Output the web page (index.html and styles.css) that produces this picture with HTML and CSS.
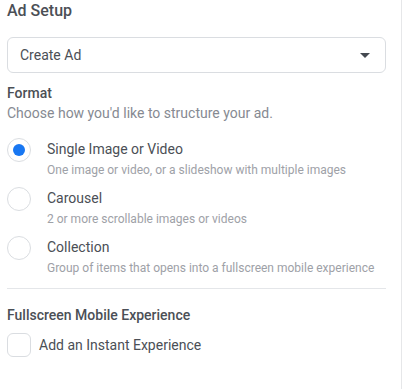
FILE: index.html
```html
<!DOCTYPE html>
<html lang="en">
<head>
  <meta charset="UTF-8" />
  <title>Ad Setup</title>
  <meta name="viewport" content="width=device-width, initial-scale=1.0" />
  <link rel="stylesheet" href="styles.css">
</head>
<body>
  <div class="panel">
    <h2 class="title">Ad Setup</h2>

    <!-- Ad mode select -->
    <div class="select">
      <span>Create Ad</span>
      <span class="caret"></span>
    </div>

    <h3 class="label">Format</h3>
    <p class="hint">Choose how you'd like to structure your ad.</p>

    <div class="options">
      <div class="option">
        <span class="radio checked"></span>
        <div>
          <div class="option-name">Single Image or Video</div>
          <div class="option-desc">One image or video, or a slideshow with multiple images</div>
        </div>
      </div>
      <div class="option">
        <span class="radio"></span>
        <div>
          <div class="option-name">Carousel</div>
          <div class="option-desc">2 or more scrollable images or videos</div>
        </div>
      </div>
      <div class="option">
        <span class="radio"></span>
        <div>
          <div class="option-name">Collection</div>
          <div class="option-desc">Group of items that opens into a fullscreen mobile experience</div>
        </div>
      </div>
    </div>

    <hr class="divider" />

    <h3 class="label section">Fullscreen Mobile Experience</h3>
    <div class="check-row">
      <span class="checkbox"></span>
      <span>Add an Instant Experience</span>
    </div>
  </div>
</body>
</html>
```

FILE: styles.css
```css
:root {
  --text: #4b4f56;
  --muted: #868a92;
  --light-muted: #9ea1a7;
  --border: #dadde1;
  --blue: #1877f2;
}

body {
  margin: 0;
  background: #fff;
  font-family: Roboto, "Liberation Sans", sans-serif;
  color: var(--text);
}

.panel {
  width: 379px;
  height: 389px;
  padding: 1px 15px 0 7px;
  border-right: 1px solid #e6e7e9;
  box-sizing: content-box;
}

.title {
  margin: 0;
  font-size: 16px;
  line-height: 20px;
  font-weight: 500;
}

.select {
  margin-top: 16px;
  height: 36px;
  box-sizing: border-box;
  border: 1px solid var(--border);
  border-radius: 6px;
  padding: 0 15px 0 12px;
  display: flex;
  align-items: center;
  justify-content: space-between;
  font-size: 14px;
}

.caret {
  width: 0;
  height: 0;
  border-left: 5px solid transparent;
  border-right: 5px solid transparent;
  border-top: 5px solid #444950;
}

.label {
  margin: 10px 0 0;
  font-size: 14px;
  line-height: 20px;
  font-weight: 500;
}

.hint {
  margin: 0;
  font-size: 14px;
  line-height: 20px;
  color: var(--muted);
}

.options {
  margin-top: 16px;
  display: flex;
  flex-direction: column;
  gap: 10px;
}

.option {
  display: flex;
  gap: 16px;
  align-items: flex-start;
}

.radio {
  flex: none;
  width: 24px;
  height: 24px;
  box-sizing: border-box;
  border: 1px solid var(--border);
  border-radius: 50%;
  display: flex;
  align-items: center;
  justify-content: center;
  margin-top: -1px;
}

.radio.checked::after {
  content: "";
  width: 12px;
  height: 12px;
  border-radius: 50%;
  background: var(--blue);
}

.option-name {
  font-size: 14px;
  line-height: 20px;
}

.option-desc {
  margin-top: 3px;
  font-size: 12px;
  line-height: 16px;
  color: var(--light-muted);
}

.divider {
  margin: 12px 0 0;
  border: 0;
  border-top: 1px solid #e4e6e9;
}

.label.section {
  margin-top: 16px;
}

.check-row {
  margin-top: 8px;
  display: flex;
  align-items: center;
  gap: 8px;
  font-size: 14px;
}

.checkbox {
  width: 24px;
  height: 24px;
  box-sizing: border-box;
  border: 1px solid var(--border);
  border-radius: 6px;
}
```
